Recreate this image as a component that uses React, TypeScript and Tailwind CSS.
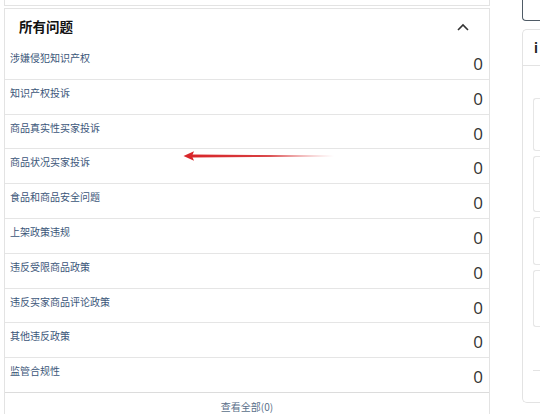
import React from "react";

const issues = [
  "涉嫌侵犯知识产权",
  "知识产权投诉",
  "商品真实性买家投诉",
  "商品状况买家投诉",
  "食品和商品安全问题",
  "上架政策违规",
  "违反受限商品政策",
  "违反买家商品评论政策",
  "其他违反政策",
  "监管合规性",
];

const ChevronUp = () => (
  <svg width="12" height="8" viewBox="0 0 12 8" fill="none">
    <path d="M1 7 L6 2 L11 7" stroke="#333" strokeWidth="1.6" />
  </svg>
);

const Arrow = () => (
  <svg
    className="absolute left-[182px] top-[150px]"
    width="154"
    height="12"
    viewBox="0 0 154 12"
  >
    <defs>
      <linearGradient id="arrowFade" x1="0" y1="0" x2="1" y2="0">
        <stop offset="0" stopColor="#d8262a" />
        <stop offset="0.55" stopColor="#d42a2c" stopOpacity="0.9" />
        <stop offset="1" stopColor="#d8262a" stopOpacity="0" />
      </linearGradient>
    </defs>
    <path d="M10 4.4 L152 5.5 L152 6.5 L10 7.6 Z" fill="url(#arrowFade)" />
    <path d="M1.5 6 L12 1.2 L10 6 L12 10.8 Z" fill="#d8262a" />
  </svg>
);

export default function App() {
  return (
    <div
      className="relative w-[540px] h-[414px] overflow-hidden bg-white flex"
      style={{ fontFamily: '"Noto Sans CJK SC", "Noto Sans", sans-serif' }}
    >
      {/* left column */}
      <div className="w-[490px] shrink-0 pl-[4px] flex flex-col">
        <div className="h-[8px] border-x border-b border-[#e3e3e3]" />
        <div className="mt-[2px] flex-1 border-x border-t border-[#e3e3e3] flex flex-col">
          <div className="h-[36px] shrink-0 flex items-center justify-between pl-[14px] pr-[20px]">
            <span className="text-[13.5px] font-bold text-[#111] leading-none">所有问题</span>
            <ChevronUp />
          </div>
          {issues.map((label, i) => (
            <div
              key={label}
              className={`h-[34.8px] shrink-0 flex items-start justify-between pl-[5px] pr-[5px] ${
                i < issues.length - 1 ? "border-b border-[#e5e5e5]" : "border-b border-[#dcdcdc]"
              }`}
            >
              <span className="mt-[6px] text-[10px] leading-[14px] text-[#3b5679]">{label}</span>
              <span className="mt-[9px] mr-[1px] font-['Open_Sans',sans-serif] text-[17px] leading-[20px] text-[#333]">
                0
              </span>
            </div>
          ))}
          <div className="pt-[7px] text-center text-[10px] leading-[14px] text-[#5a6f8a]">
            查看全部(0)
          </div>
        </div>
      </div>

      {/* right column */}
      <div className="ml-[32px] flex-1 flex flex-col">
        <div className="h-[23px] -mt-[2px] shrink-0 border-l border-b border-[#4f5b66] rounded-bl-[4px]" />
        <div className="mt-[8px] h-[374px] shrink-0 border-l border-y border-[#e3e3e3] rounded-l-[5px] flex flex-col">
          <div className="h-[36px] border-b border-[#e3e3e3] pl-[11px] flex items-center">
            <span className="text-[13px] font-bold text-[#222]">i</span>
          </div>
          <div className="pl-[10px] pt-[32px] flex flex-col gap-[5px]">
            <div className="h-[53px] border-l border-y border-[#e6e6e6] rounded-l-[3px]" />
            <div className="h-[56px] border-l border-y border-[#e6e6e6] rounded-l-[3px]" />
            <div className="h-[48px] border-l border-y border-[#e6e6e6] rounded-l-[3px]" />
            <div className="h-[57px] border-l border-y border-[#e6e6e6] rounded-l-[3px]" />
          </div>
          <div className="ml-[10px] mt-[43px] border-t border-[#e3e3e3]" />
        </div>
      </div>

      <Arrow />
    </div>
  );
}
